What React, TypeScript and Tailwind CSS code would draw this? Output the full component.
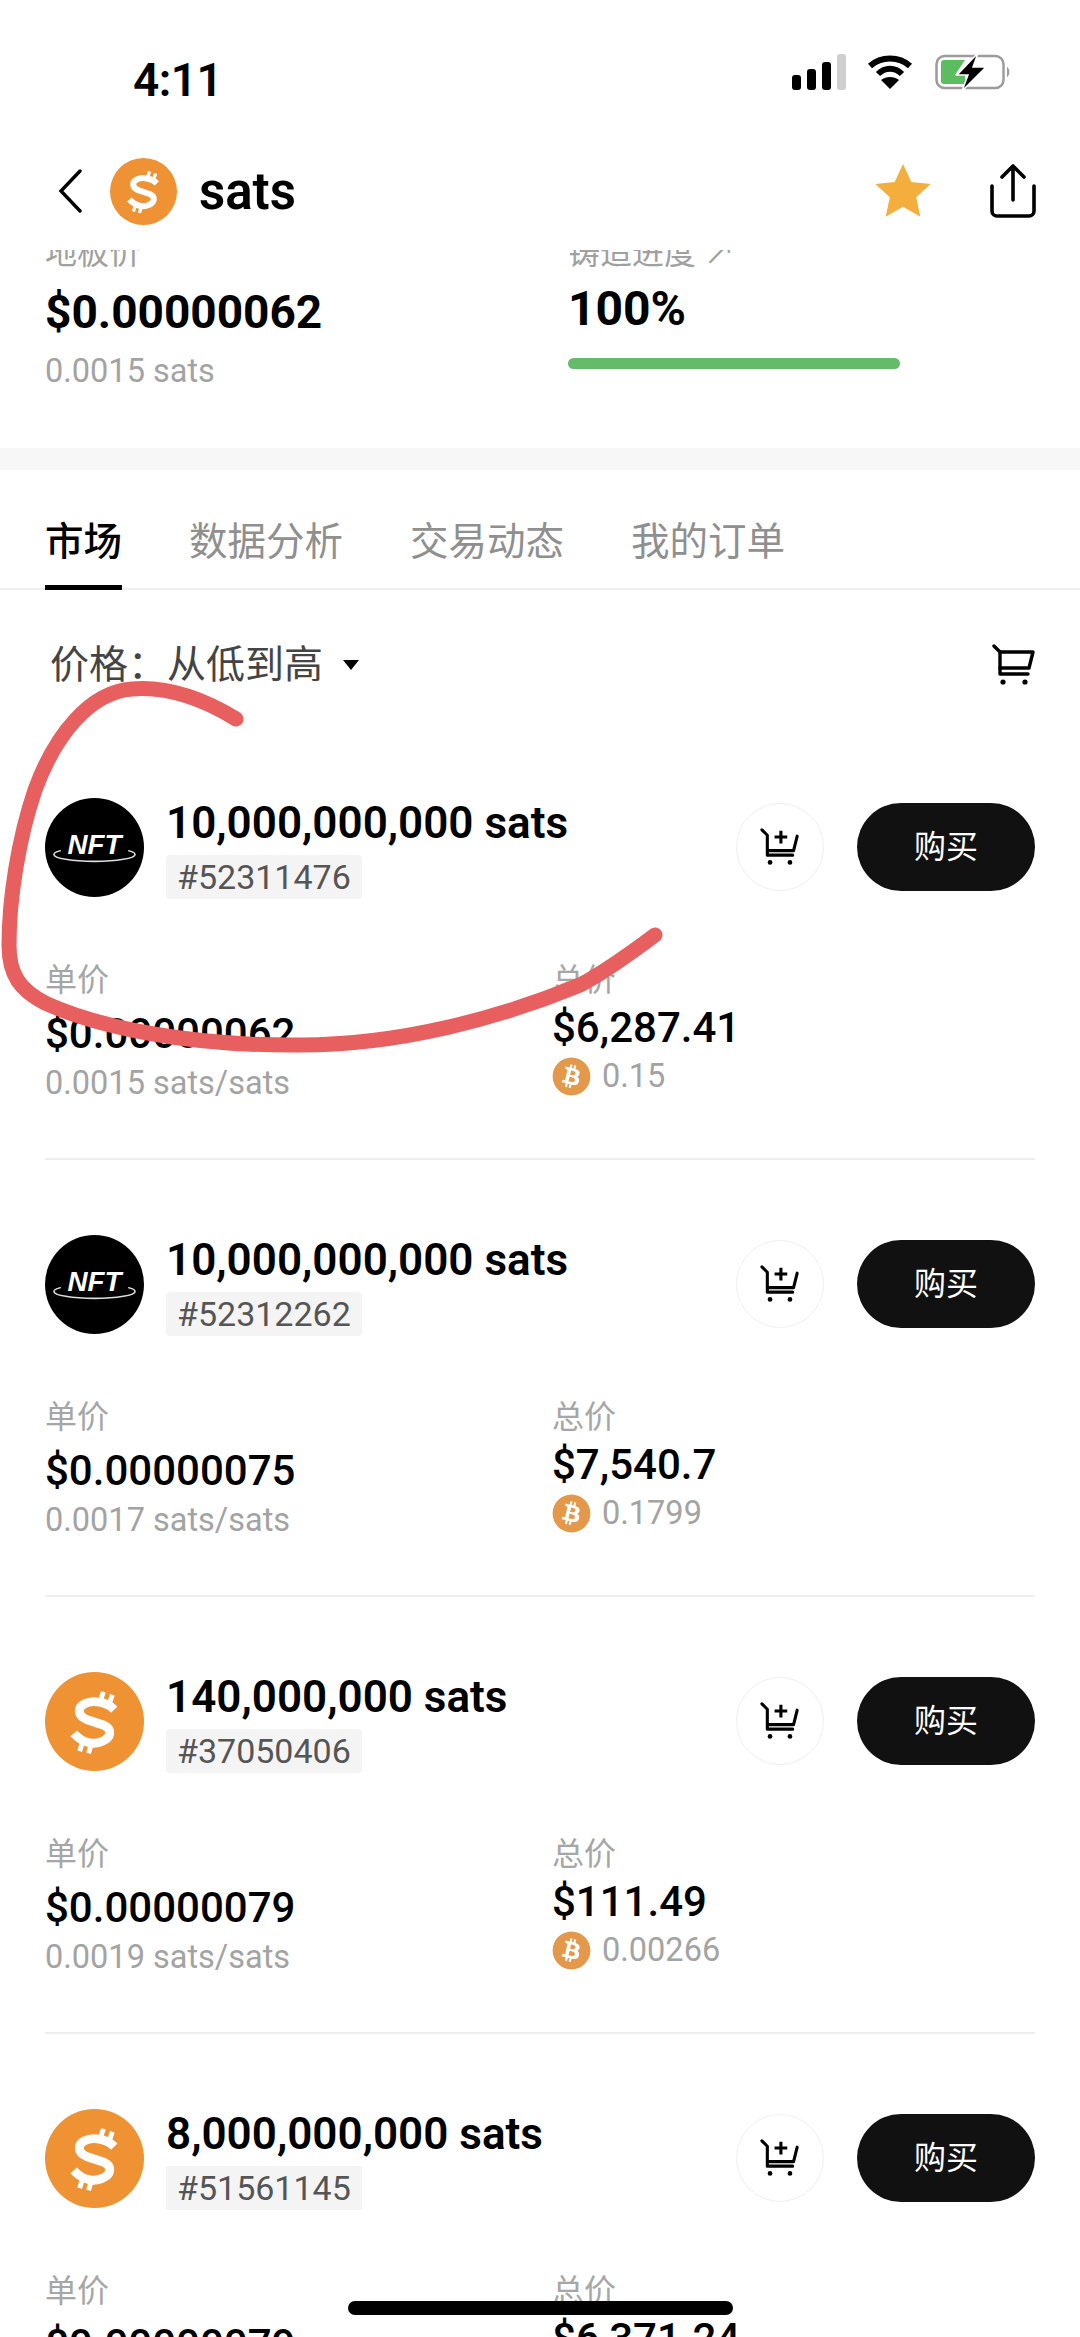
import { FaBitcoin } from "react-icons/fa";

type Listing = {
  amount: string;
  id: string;
  logo: "nft" | "sats";
  unitPrice: string;
  unitSats: string;
  total: string;
  btc: string;
};

const listings: Listing[] = [
  { amount: "10,000,000,000 sats", id: "#52311476", logo: "nft", unitPrice: "$0.00000062", unitSats: "0.0015 sats/sats", total: "$6,287.41", btc: "0.15" },
  { amount: "10,000,000,000 sats", id: "#52312262", logo: "nft", unitPrice: "$0.00000075", unitSats: "0.0017 sats/sats", total: "$7,540.7", btc: "0.1799" },
  { amount: "140,000,000 sats", id: "#37050406", logo: "sats", unitPrice: "$0.00000079", unitSats: "0.0019 sats/sats", total: "$111.49", btc: "0.00266" },
  { amount: "8,000,000,000 sats", id: "#51561145", logo: "sats", unitPrice: "$0.00000079", unitSats: "0.0019 sats/sats", total: "$6,371.24", btc: "0.152" }
];

const SatsLogo = ({ className }: { className: string }) => (
  <svg viewBox="0 0 100 100" className={className}>
    <circle cx="50" cy="50" r="50" fill="#ef9233" />
    <path
      d="M70 38C62 30 48 28 40 32C32 36 33 44 42 48L60 54C68 58 67 66 58 70C50 74 38 72 29 62"
      fill="none"
      stroke="#fff"
      strokeWidth="9"
    />
    <path d="M56 29L59 20M65 32L68 23M38 70L35 80M47 72L44 82" stroke="#fff" strokeWidth="5" />
  </svg>
);

const NftLogo = ({ className }: { className: string }) => (
  <svg viewBox="0 0 100 100" className={className}>
    <circle cx="50" cy="50" r="50" fill="#000" />
    <ellipse cx="50" cy="57" rx="41" ry="7" fill="none" stroke="#ddd" strokeWidth="1.6" />
    <rect x="16" y="44" width="68" height="14" fill="#000" />
    <text x="50" y="57" textAnchor="middle" fill="#fff" fontSize="28" fontWeight="700" fontStyle="italic" fontFamily="'Liberation Sans', sans-serif">
      NFT
    </text>
  </svg>
);

const CartIcon = ({ className, plus }: { className: string; plus?: boolean }) => (
  <svg viewBox="0 0 44 42" fill="none" stroke="#000" strokeWidth="3.4" className={className}>
    <path d="M2 2L8 8V30H36" strokeLinecap="round" strokeLinejoin="round" />
    <path d={plus ? "M41 9L37 25H9" : "M8 8H41L37 24H8"} strokeLinecap="round" strokeLinejoin="round" />
    {plus && <path d="M23 3V17M16 10H30" />}
    <circle cx="11" cy="38" r="2.6" fill="#000" stroke="none" />
    <circle cx="33" cy="38" r="2.6" fill="#000" stroke="none" />
  </svg>
);

const StatusBar = () => (
  <div className="flex h-[108px] items-end justify-between pl-[133px] pr-[69px]">
    <span className="text-[46px] font-semibold leading-[56px] tracking-[-0.5px] text-black">4:11</span>
    <div className="mb-[17px] flex items-center">
      <svg viewBox="0 0 54 36" className="h-[36px] w-[54px]">
        <rect x="0" y="21" width="9" height="15" rx="3" fill="#000" />
        <rect x="15" y="15" width="9" height="21" rx="3" fill="#000" />
        <rect x="30" y="8" width="9" height="28" rx="3" fill="#000" />
        <rect x="45" y="0" width="9" height="36" rx="3" fill="#cfcfcf" />
      </svg>
      <svg viewBox="0 0 46 34" className="ml-[21px] h-[34px] w-[46px]" fill="none" stroke="#000" strokeWidth="6">
        <path d="M3 11C14 1 32 1 43 11" />
        <path d="M11 19C18 12 28 12 35 19" />
        <path d="M23 34L14 25C19 21 27 21 32 25Z" fill="#000" stroke="none" />
      </svg>
      <svg viewBox="0 0 76 38" className="ml-[22px] h-[38px] w-[76px]">
        <rect x="1.5" y="3" width="67" height="32" rx="8" fill="none" stroke="#9c9c9c" strokeWidth="2.5" />
        <path d="M6 10a3 3 0 0 1 3-3H30L20 22H30V31H9a3 3 0 0 1-3-3Z" fill="#5bbd5f" />
        <path d="M72 14c3 1 3 9 0 10Z" fill="#9c9c9c" />
        <path d="M43 0L22 22H33L27 38L51 14H38Z" fill="#000" stroke="#fff" strokeWidth="1.5" />
      </svg>
    </div>
  </div>
);

const Header = () => (
  <div className="flex h-[142px] items-center justify-between pl-[58px] pr-[44px] pt-[24px]">
    <div className="flex items-center">
      <svg viewBox="0 0 24 44" className="h-[44px] w-[24px]" fill="none" stroke="#000" strokeWidth="3.4" strokeLinecap="round">
        <path d="M22 2L3 22L22 42" />
      </svg>
      <SatsLogo className="ml-[28px] h-[67px] w-[67px]" />
      <span className="ml-[22px] text-[51px] font-semibold leading-none text-black">sats</span>
    </div>
    <div className="flex items-center">
      <svg viewBox="0 0 24 24" className="h-[62px] w-[62px]" fill="#f3ae3d">
        <path d="M12 1.5l3.2 7 7.500.8-5.600 5.100 1.600 7.600-6.700-3.900-6.700 3.900 1.600-7.600-5.600-5.100 7.500-.8z" />
      </svg>
      <svg viewBox="0 0 46 54" className="ml-[56px] h-[54px] w-[46px]" fill="none" stroke="#000" strokeWidth="3.6" strokeLinecap="round" strokeLinejoin="round">
        <path d="M2 22V47a5 5 0 0 0 5 5H39a5 5 0 0 0 5-5V22" />
        <path d="M23 36V3M12 13L23 2L34 13" />
      </svg>
    </div>
  </div>
);

const Summary = () => (
  <div className="h-[198px] overflow-hidden">
    <div className="-mt-[14px] grid grid-cols-[523px_1fr] pl-[45px]">
      <div>
        <p className="text-[32px] leading-[34px] text-[#a0a0a0]">地板价</p>
        <p className="mt-[14px] text-[46px] font-bold leading-[56px] text-black">$0.00000062</p>
        <p className="mt-[11px] text-[32.5px] leading-[40px] text-[#a3a3a3]">0.0015 sats</p>
      </div>
      <div>
        <p className="text-[32px] leading-[34px] text-[#a0a0a0]">铸造进度 ↗</p>
        <p className="mt-[11px] text-[48px] font-bold leading-[56px] text-black">100%</p>
        <div className="mt-[21px] h-[11px] w-[332px] rounded-full bg-[#66bb6a]" />
      </div>
    </div>
  </div>
);

const Tabs = () => (
  <div className="flex h-[120px] items-end gap-[67px] border-b-2 border-[#eeeeee] px-[45px]">
    {["市场", "数据分析", "交易动态", "我的订单"].map((tab, index) => (
      <div
        key={tab}
        className={`-mb-[2px] h-[72px] border-b-[5px] text-[38.5px] leading-[48px] ${
          index === 0 ? "border-black font-medium text-black" : "border-transparent text-[#8f8f8f]"
        }`}
      >
        {tab}
      </div>
    ))}
  </div>
);

const SortBar = () => (
  <div className="flex h-[120px] items-center justify-between pl-[50px] pr-[44px] pt-[30px]">
    <div className="flex items-center">
      <span className="text-[39px] leading-[44px] text-[#444]">价格：从低到高</span>
      <span className="ml-[20px] h-0 w-0 border-x-[8px] border-t-[10px] border-x-transparent border-t-black" />
    </div>
    <CartIcon className="h-[42px] w-[44px]" />
  </div>
);

const ListingRow = ({ item }: { item: Listing }) => (
  <div className="mx-[45px] h-[437px] border-b-2 border-[#eeeeee] pt-[74px]">
    <div className="flex h-[100px] items-center">
      {item.logo === "nft" ? <NftLogo className="h-[99px] w-[99px]" /> : <SatsLogo className="h-[99px] w-[99px]" />}
      <div className="ml-[22px] flex-1 pt-[4px]">
        <p className="text-[44px] font-semibold leading-[48px] text-black">{item.amount}</p>
        <span className="mt-[8px] inline-block rounded-[4px] bg-[#f4f4f4] px-[11px] text-[34px] leading-[44px] text-[#555]">
          {item.id}
        </span>
      </div>
      <div className="flex h-[88px] w-[88px] items-center justify-center rounded-full border border-[#f0f0f0]">
        <CartIcon plus className="h-[38px] w-[40px]" />
      </div>
      <button type="button" className="ml-[33px] h-[88px] w-[178px] rounded-full bg-[#111111] text-[32px] text-white">
        购买
      </button>
    </div>
    <div className="mt-[64px] grid grid-cols-[507px_1fr]">
      <div>
        <p className="text-[32px] leading-[38px] text-[#a6a6a6]">单价</p>
        <p className="mt-[10px] text-[42px] font-medium leading-[50px] text-black">{item.unitPrice}</p>
        <p className="mt-[4px] text-[32.5px] leading-[40px] text-[#a3a3a3]">{item.unitSats}</p>
      </div>
      <div>
        <p className="text-[32px] leading-[38px] text-[#a6a6a6]">总价</p>
        <p className="mt-[4px] text-[42px] font-medium leading-[50px] text-black">{item.total}</p>
        <div className="mt-[3px] flex h-[40px] items-center">
          <FaBitcoin className="h-[39px] w-[39px] rounded-full bg-white text-[#e3984a]" />
          <span className="ml-[11px] text-[32.5px] leading-[40px] text-[#a3a3a3]">{item.btc}</span>
        </div>
      </div>
    </div>
  </div>
);

export default function App() {
  return (
    <div className="relative h-[2337px] w-[1080px] overflow-hidden bg-white font-['Roboto','Noto_Sans_CJK_SC',sans-serif]">
      <StatusBar />
      <Header />
      <Summary />
      <div className="h-[22px] bg-[#f7f7f7]" />
      <Tabs />
      <SortBar />
      <div className="mt-[13px]">
        {listings.map((item) => (
          <ListingRow key={item.id} item={item} />
        ))}
      </div>

      {/* hand drawn mark on top of the screenshot */}
      <svg viewBox="0 0 1080 2337" className="pointer-events-none absolute inset-0 h-[2337px] w-[1080px]" fill="none">
        <path
          d="M236 719C205 700 170 686 132 689C90 692 55 735 35 790C18 840 9 900 9 945C9 975 20 990 45 1003C100 1028 190 1046 300 1045C400 1045 500 1018 580 985C605 972 635 950 655 935"
          stroke="#e85f5f"
          strokeWidth="15"
          strokeLinecap="round"
        />
      </svg>

      <div className="absolute bottom-[22px] left-[348px] h-[14px] w-[385px] rounded-full bg-black" />
    </div>
  );
}
